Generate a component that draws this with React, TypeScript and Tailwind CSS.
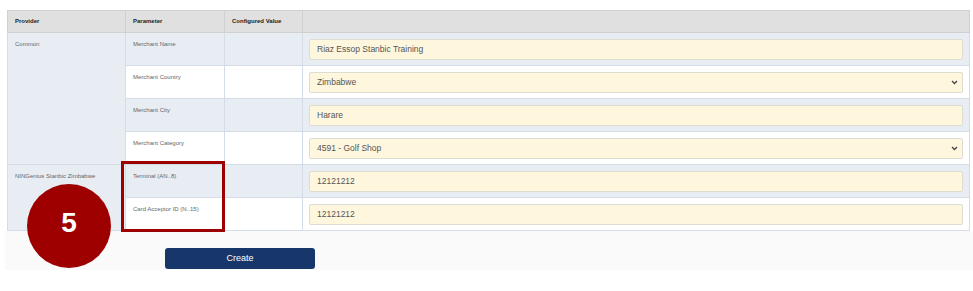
import React from 'react';

type Row = {
    param: string;
    value: string;
    kind: 'input' | 'select';
};

const common: Row[] = [
    { param: 'Merchant Name', value: 'Riaz Essop Stanbic Training', kind: 'input' },
    { param: 'Merchant Country', value: 'Zimbabwe', kind: 'select' },
    { param: 'Merchant City', value: 'Harare', kind: 'input' },
    { param: 'Merchant Category', value: '4591 - Golf Shop', kind: 'select' },
];

const provider: Row[] = [
    { param: 'Terminal (AN..8)', value: '12121212', kind: 'input' },
    { param: 'Card Acceptor ID (N..15)', value: '12121212', kind: 'input' },
];

const Field: React.FC<{ row: Row }> = ({ row }) => (
    <div className="relative h-[21px] w-full rounded-[2px] border border-[#dcdcd0] bg-[#fef7de] pl-[7px] text-[8.5px] leading-[19px] text-[#555]">
        {row.value}
        {row.kind === 'select' && (
            <svg className="absolute right-[4px] top-[7px]" width="7" height="5" viewBox="0 0 7 5">
                <path d="M1 1 L3.5 3.5 L6 1" fill="none" stroke="#444" strokeWidth="1.3" />
            </svg>
        )}
    </div>
);

const cell = 'border border-[#d3dce7] align-top';
const label = 'px-[7px] pt-[7px] text-[6px] leading-[8px] text-[#666]';

const App: React.FC = () => {
    const renderGroup = (name: string, rows: Row[]) =>
        rows.map((row, i) => {
            const bg = i % 2 === 0 ? 'bg-[#e8edf4]' : 'bg-white';
            return (
                <tr key={row.param} className={`h-[33px] ${bg}`}>
                    {i === 0 && (
                        <td rowSpan={rows.length} className={`${cell} ${label} bg-[#e8edf4]`}>
                            {name}
                        </td>
                    )}
                    <td className={`${cell} ${label}`}>{row.param}</td>
                    <td className={cell}></td>
                    <td className={`${cell} px-[6px] pt-[6px]`}>
                        <Field row={row} />
                    </td>
                </tr>
            );
        });

    return (
        <div className="relative h-[291px] w-[973px] overflow-hidden bg-white" style={{ fontFamily: '"Liberation Sans", Arial, sans-serif' }}>
            <div className="pl-[7px] pr-[3px] pt-[10px]">
                <table className="w-[963px] table-fixed border-collapse">
                    <colgroup>
                        <col className="w-[118px]" />
                        <col className="w-[99px]" />
                        <col className="w-[78px]" />
                        <col />
                    </colgroup>
                    <thead>
                        <tr className="h-[22px] bg-[#e0e0e0] text-left text-[6px] font-bold text-[#222]">
                            <th className="border border-[#d0d0d0] px-[7px]">Provider</th>
                            <th className="border border-[#d0d0d0] px-[7px]">Parameter</th>
                            <th className="border border-[#d0d0d0] px-[7px]">Configured Value</th>
                            <th className="border border-[#d0d0d0]"></th>
                        </tr>
                    </thead>
                    <tbody>
                        {renderGroup('Common', common)}
                        {renderGroup('NINGenius Stanbic Zimbabwe', provider)}
                    </tbody>
                </table>
            </div>
            <div className="ml-[5px] h-[39px] bg-[#fafafa] pl-[160px] pt-[17px]">
                <button className="block h-[21px] w-[150px] rounded-[3px] bg-[#17376b] text-[9px] text-white">Create</button>
            </div>

            {/* callout annotations */}
            <div className="absolute left-[121px] top-[161px] h-[71px] w-[104px] border-[3px] border-[#9c0000]" />
            <div className="absolute left-[27px] top-[184px] flex h-[84px] w-[84px] items-center justify-center rounded-full bg-[#9e0000] pb-[6px] text-[28px] font-bold text-white">
                5
            </div>
        </div>
    );
};

export default App;
